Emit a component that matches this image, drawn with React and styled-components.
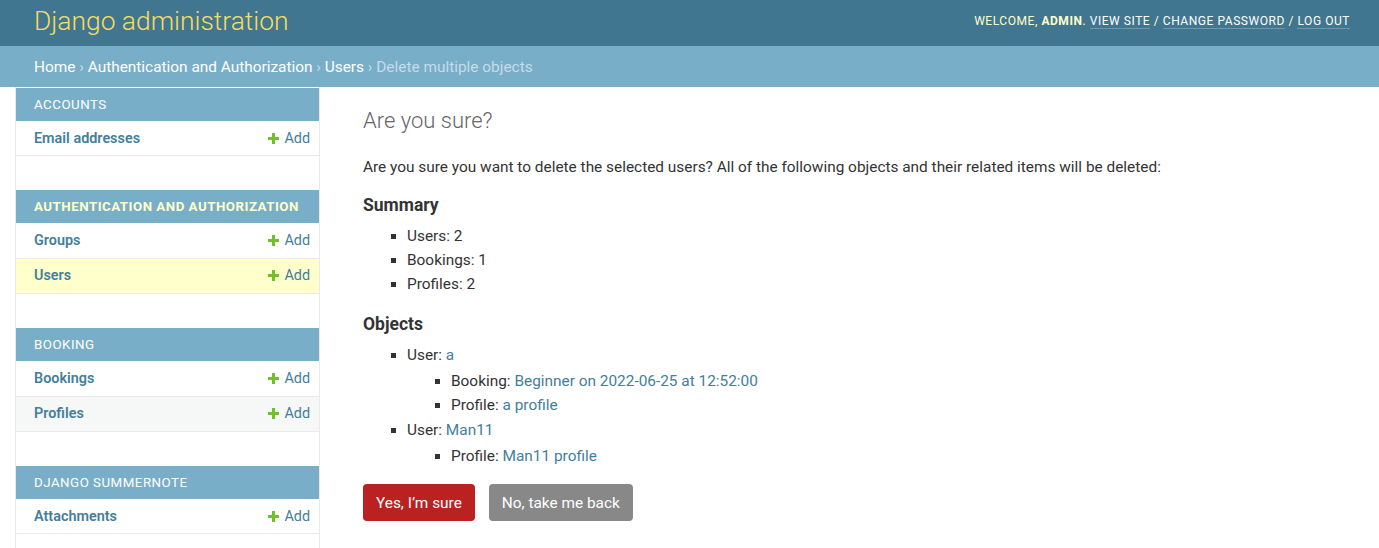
import styled, { createGlobalStyle } from 'styled-components';

const GlobalStyle = createGlobalStyle`
  html, body {
    margin: 0;
    padding: 0;
    background: #fff;
  }
  body {
    font-family: Roboto, "Liberation Sans", sans-serif;
    font-size: 15.4px;
    color: #333;
  }
  a {
    color: #447e9b;
    text-decoration: none;
  }
`;

const sidebar = [
  { name: 'Accounts', models: [{ name: 'Email addresses' }] },
  {
    name: 'Authentication and Authorization',
    current: true,
    models: [{ name: 'Groups' }, { name: 'Users', selected: true }],
  },
  { name: 'Booking', models: [{ name: 'Bookings' }, { name: 'Profiles', hover: true }] },
  { name: 'Django Summernote', models: [{ name: 'Attachments' }] },
];

const Plus = () => (
  <svg width="11" height="11" viewBox="0 0 11 11">
    <path d="M4 0h3v4h4v3H7v4H4V7H0V4h4z" fill="#70bf2b" />
  </svg>
);

const App = () => {
  return (
    <>
      <GlobalStyle />
      <Header>
        <Branding>Django administration</Branding>
        <UserTools>
          Welcome, <strong>admin</strong>. <a href="#">View site</a> / <a href="#">Change password</a> / <a href="#">Log out</a>
        </UserTools>
      </Header>
      <Breadcrumbs>
        <a href="#">Home</a> › <a href="#">Authentication and Authorization</a> › <a href="#">Users</a> › Delete multiple objects
      </Breadcrumbs>
      <Main>
        <Toggle />
        <NavSidebar>
          {sidebar.map((app) => (
            <Module key={app.name}>
              <Caption $current={app.current}>{app.name}</Caption>
              {app.models.map((m) => (
                <ModelRow key={m.name} $selected={m.selected} $hover={m.hover}>
                  <ModelName href="#">{m.name}</ModelName>
                  <AddLink href="#">
                    <Plus />
                    Add
                  </AddLink>
                </ModelRow>
              ))}
            </Module>
          ))}
        </NavSidebar>
        <Content>
          <Title>Are you sure?</Title>
          <Intro>
            Are you sure you want to delete the selected users? All of the following objects and their related items will be deleted:
          </Intro>
          <SubTitle>Summary</SubTitle>
          <List>
            <li>Users: 2</li>
            <li>Bookings: 1</li>
            <li>Profiles: 2</li>
          </List>
          <SubTitle>Objects</SubTitle>
          <List $last>
            <li>
              User: <a href="#">a</a>
              <List $nested>
                <li>
                  Booking: <a href="#">Beginner on 2022-06-25 at 12:52:00</a>
                </li>
                <li>
                  Profile: <a href="#">a profile</a>
                </li>
              </List>
            </li>
            <li>
              User: <a href="#">Man11</a>
              <List $nested>
                <li>
                  Profile: <a href="#">Man11 profile</a>
                </li>
              </List>
            </li>
          </List>
          <Actions>
            <Button $danger>Yes, I’m sure</Button>
            <Button>No, take me back</Button>
          </Actions>
        </Content>
      </Main>
    </>
  );
};

const Header = styled.header`
  display: flex;
  align-items: center;
  justify-content: space-between;
  height: 46px;
  padding: 0 29px 0 34px;
  background: #417690;
  color: #ffc;
`;

const Branding = styled.h1`
  margin: 0;
  font-size: 26.4px;
  font-weight: 300;
  color: #f5dd5d;
  line-height: 1;
  padding-bottom: 4px;
`;

const UserTools = styled.div`
  font-size: 12px;
  letter-spacing: 0.55px;
  text-transform: uppercase;
  color: #ffc;
  padding-bottom: 4px;

  strong {
    font-weight: 700;
    color: #ffc;
  }
  a {
    color: #fff;
    border-bottom: 1px solid rgba(255, 255, 255, 0.25);
  }
`;

const Breadcrumbs = styled.div`
  height: 41px;
  box-sizing: border-box;
  padding: 11px 34px 9px;
  line-height: 21px;
  background: #79aec8;
  color: #c4dce8;
  font-size: 15.4px;

  a {
    color: #fff;
  }
`;

const Main = styled.div`
  display: flex;
  align-items: stretch;
  min-height: calc(100vh - 87px);
`;

const Toggle = styled.div`
  flex: 0 0 15px;
  border-right: 1px solid #eaeaea;
`;

const NavSidebar = styled.nav`
  flex: 0 0 303px;
  border-right: 1px solid #eaeaea;
  padding-top: 1px;
`;

const Module = styled.div`
  margin-bottom: 34px;
`;

const Caption = styled.div`
  height: 33px;
  box-sizing: border-box;
  padding: 0 18px;
  display: flex;
  align-items: center;
  background: #79aec8;
  color: ${(p) => (p.$current ? '#ffc' : '#fff')};
  font-size: 13.3px;
  font-weight: ${(p) => (p.$current ? 700 : 400)};
  letter-spacing: 0.5px;
  text-transform: uppercase;
`;

const ModelRow = styled.div`
  display: flex;
  align-items: center;
  justify-content: space-between;
  height: 35.4px;
  box-sizing: border-box;
  padding: 0 9px 0 18px;
  border-bottom: 1px solid #eaeaea;
  background: ${(p) => (p.$selected ? '#ffc' : p.$hover ? '#f6f7f7' : '#fff')};
`;

const ModelName = styled.a`
  font-weight: 600;
  font-size: 14.4px;
  color: #447e9b;
`;

const AddLink = styled.a`
  display: flex;
  align-items: center;
  gap: 5px;
  font-size: 14.4px;
  color: #447e9b;
`;

const Content = styled.div`
  flex: 1;
  padding: 21px 40px 20px 43px;
`;

const Title = styled.h1`
  margin: 0 0 22px;
  font-size: 22px;
  line-height: 26px;
  font-weight: 300;
  color: #666;
`;

const Intro = styled.p`
  margin: 0 0 16px;
  line-height: 22px;
`;

const SubTitle = styled.h2`
  margin: 0 0 8px;
  font-size: 17.5px;
  line-height: 22px;
  font-weight: 700;
  color: #333;
`;

const List = styled.ul`
  margin: ${(p) => (p.$nested ? '3px 0 0' : p.$last ? '0 0 15px' : '0 0 17px')};
  padding-left: 44px;

  li {
    list-style-type: square;
    line-height: 22px;
    padding: 1px 0;
  }
`;

const Actions = styled.div`
  display: flex;
  gap: 14px;
`;

const Button = styled.button`
  height: 37px;
  padding: 0 13px;
  border: 0;
  border-radius: 4px;
  background: ${(p) => (p.$danger ? '#ba2121' : '#888')};
  color: #fff;
  font-family: Roboto, "Liberation Sans", sans-serif;
  font-size: 15.4px;
  cursor: pointer;
`;

export default App;
